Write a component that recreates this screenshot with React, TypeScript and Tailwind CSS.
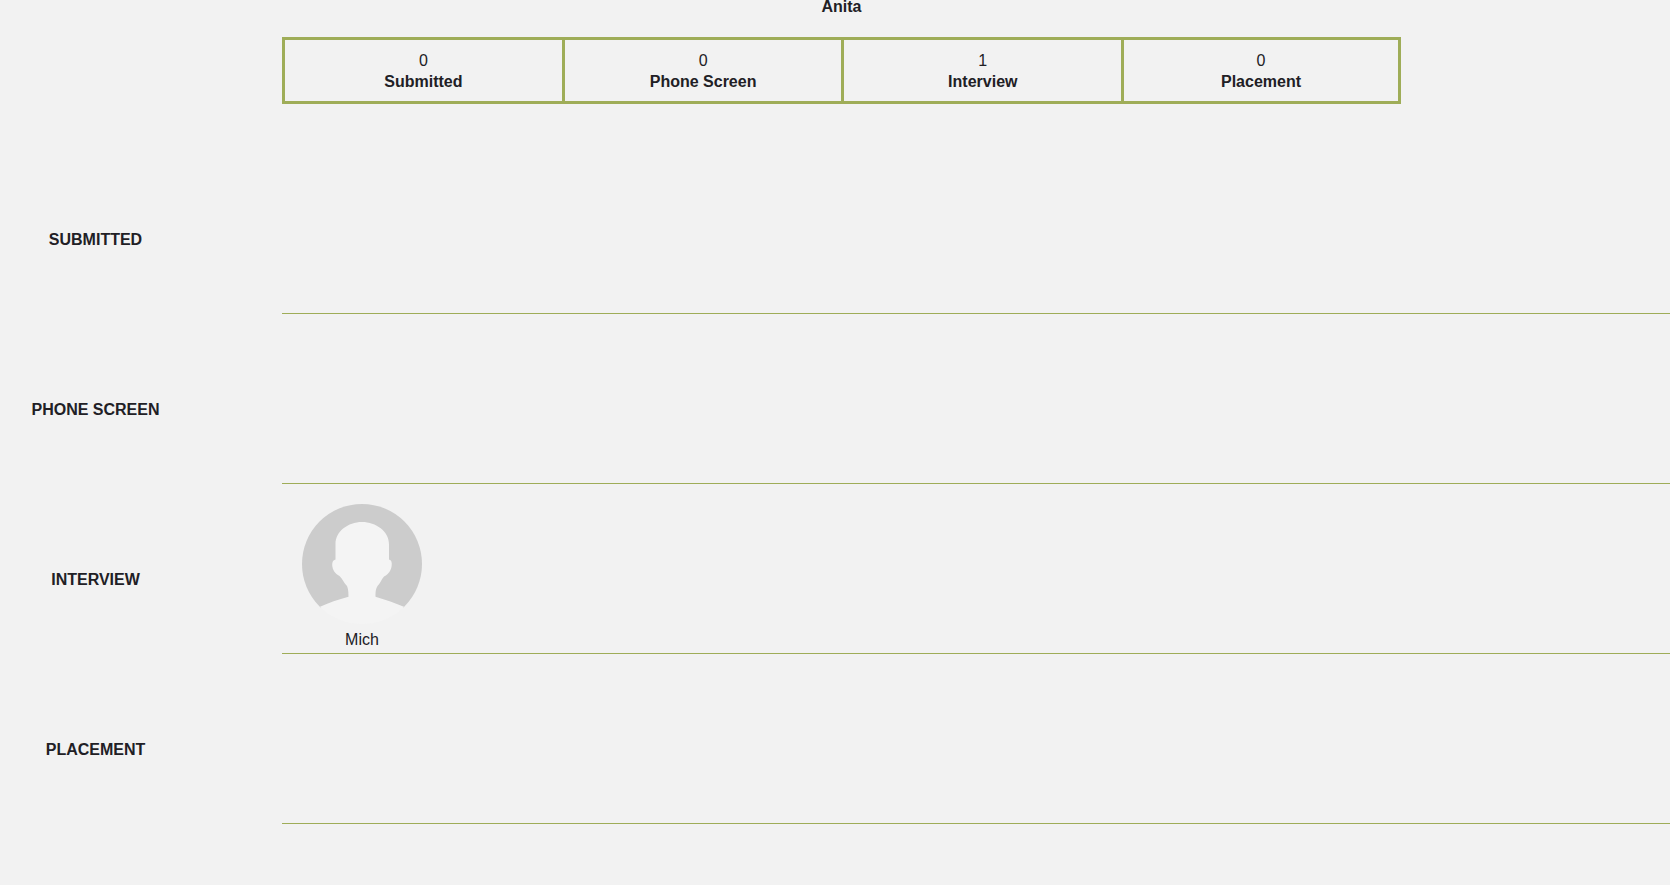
const summary = [
  { label: "Submitted", count: 0 },
  { label: "Phone Screen", count: 0 },
  { label: "Interview", count: 1 },
  { label: "Placement", count: 0 },
];

const stages: { name: string; candidates: string[] }[] = [
  { name: "Submitted", candidates: [] },
  { name: "Phone Screen", candidates: [] },
  { name: "Interview", candidates: ["Mich"] },
  { name: "Placement", candidates: [] },
];

function Avatar() {
  return (
    <svg viewBox="0 0 120 120" className="size-[120px]" aria-hidden="true">
      <defs>
        <clipPath id="avatar-circle">
          <circle cx="60" cy="60" r="60" />
        </clipPath>
      </defs>
      <g clipPath="url(#avatar-circle)">
        <rect width="120" height="104" fill="#cccccc" />
        <path
          fill="#f4f4f4"
          d="M60 18C74 18 87 27.5 87 40V55.500C89.500 56 90 58.500 89.700 61.500C89.300 66.500 86 70.500 82 72.500C79 76 78.500 79 75.500 82C74 84.500 73.500 87 73.500 92.700C83 95.500 92 98.500 102.500 103L110 120H10L17.500 103C27 98.500 36 95.500 46.500 92.700C46.500 87 46 84.500 45 82C41.500 79 41 75 37.500 72C33 69.500 30.500 66 30.200 61C30.200 58 31 56 33.500 55.500V40C33.500 27.500 46 18 60 18Z"
        />
      </g>
    </svg>
  );
}

export default function App() {
  return (
    <main className="flex min-h-screen flex-col overflow-hidden bg-[#f2f2f2] font-['Liberation_Sans',Arial,sans-serif] text-base text-[#212025]">
      <header className="-mt-1 ml-[282px] flex w-[67%] flex-col gap-5 text-center leading-[21px]">
        <h1 className="font-bold">Anita</h1>
        <dl className="grid grid-cols-4">
          {summary.map((item) => (
            <div
              key={item.label}
              className="flex flex-col-reverse border-y-[3px] border-l-[3px] border-[#9fad58] pt-2.5 pb-[9px] last:border-r-[3px]"
            >
              <dt className="font-bold">{item.label}</dt>
              <dd>{item.count}</dd>
            </div>
          ))}
        </dl>
      </header>

      <div className="mt-10 flex flex-col">
        {stages.map((stage) => (
          <section key={stage.name} className="flex h-[170px] items-stretch">
            <h2 className="mr-[91px] flex w-[191px] shrink-0 items-center justify-center pt-[22px] font-bold uppercase leading-5">
              {stage.name}
            </h2>
            <ul className="flex grow gap-5 border-b border-[#9fad58] px-5 pt-5">
              {stage.candidates.map((name) => (
                <li key={name} className="flex flex-col items-center gap-1 leading-6">
                  <Avatar />
                  {name}
                </li>
              ))}
            </ul>
          </section>
        ))}
      </div>
    </main>
  );
}
